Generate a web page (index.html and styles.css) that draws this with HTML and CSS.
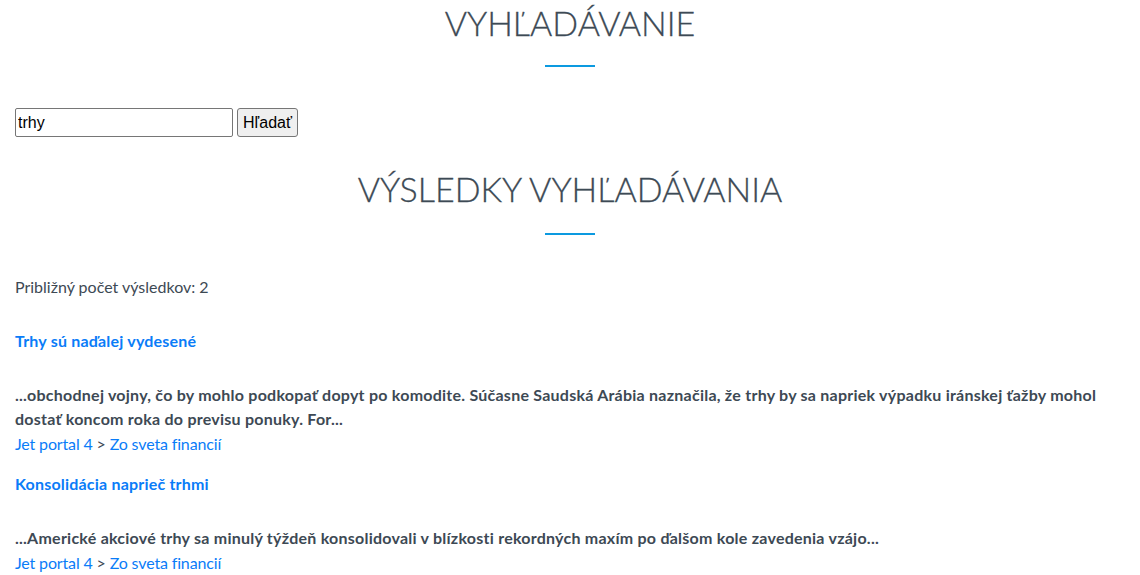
FILE: index.html
```html
<!DOCTYPE html>
<html lang="sk">
<head>
<meta charset="utf-8">
<title>Vyhľadávanie</title>
<link rel="stylesheet" href="styles.css">
</head>
<body>
<div class="page">
  <h1 class="title">VYHĽADÁVANIE</h1>
  <div class="rule"></div>
  <form class="search">
    <input class="search-input" type="text" value="trhy">
    <button class="search-btn" type="button">Hľadať</button>
  </form>
  <h2 class="title title-results">VÝSLEDKY VYHĽADÁVANIA</h2>
  <div class="rule rule-results"></div>
  <p class="count">Približný počet výsledkov: 2</p>
  <div class="result">
    <a class="result-title" href="#">Trhy sú naďalej vydesené</a>
    <p class="snippet">...obchodnej vojny, čo by mohlo podkopať dopyt po komodite. Súčasne Saudská Arábia naznačila, že trhy by sa napriek výpadku iránskej ťažby mohol dostať koncom roka do previsu ponuky. For...</p>
    <div class="crumbs"><a href="#">Jet portal 4</a> &gt; <a href="#">Zo sveta financií</a></div>
  </div>
  <div class="result">
    <a class="result-title" href="#">Konsolidácia naprieč trhmi</a>
    <p class="snippet">...Americké akciové trhy sa minulý týždeň konsolidovali v blízkosti rekordných maxím po ďalšom kole zavedenia vzájo...</p>
    <div class="crumbs"><a href="#">Jet portal 4</a> &gt; <a href="#">Zo sveta financií</a></div>
  </div>
</div>
</body>
</html>
```

FILE: styles.css
```css
* { box-sizing: border-box; }
html, body { margin: 0; padding: 0; background: #fff; }
body {
  font-family: Lato, "Open Sans", sans-serif;
  color: #3d4954;
  font-size: 16px;
}
.page {
  padding: 0 15px;
}
.title {
  margin: 0;
  text-align: center;
  font-weight: 300;
  font-size: 34px;
  line-height: 46px;
  color: #3d4a55;
  -webkit-text-stroke: 0.3px #3d4a55;
}
.rule {
  width: 50px;
  height: 2px;
  background: #0c9ae0;
  margin: 19px auto 0;
}
.rule-results { margin-top: 21px; }
.search {
  display: flex;
  gap: 4px;
  margin-top: 41px;
  height: 29px;
}
.search-input {
  width: 218px;
  height: 29px;
  border: 1px solid #767676;
  border-radius: 2px;
  padding: 0 2px;
  font: 16px "Liberation Sans", Arial, sans-serif;
  color: #000;
}
.search-btn {
  width: 61px;
  height: 29px;
  border: 1px solid #767676;
  border-radius: 3px;
  background: #efefef;
  font: 16px "Liberation Sans", Arial, sans-serif;
  color: #000;
  padding: 0;
}
.title-results { margin-top: 29px; }
.count {
  margin: 40px 0 0;
  line-height: 24px;
}
.result { margin-top: 30px; }
.result + .result { margin-top: 16px; }
.result-title {
  display: block;
  color: #0a7cf8;
  font-weight: 700;
  letter-spacing: 0.2px;
  text-decoration: none;
  line-height: 24px;
}
.snippet {
  margin: 30px 0 0;
  font-weight: 700;
  letter-spacing: 0.24px;
  line-height: 24px;
}
.crumbs {
  line-height: 25px;
  letter-spacing: -0.15px;
}
.crumbs a {
  color: #0a7cf8;
  text-decoration: none;
}
```
